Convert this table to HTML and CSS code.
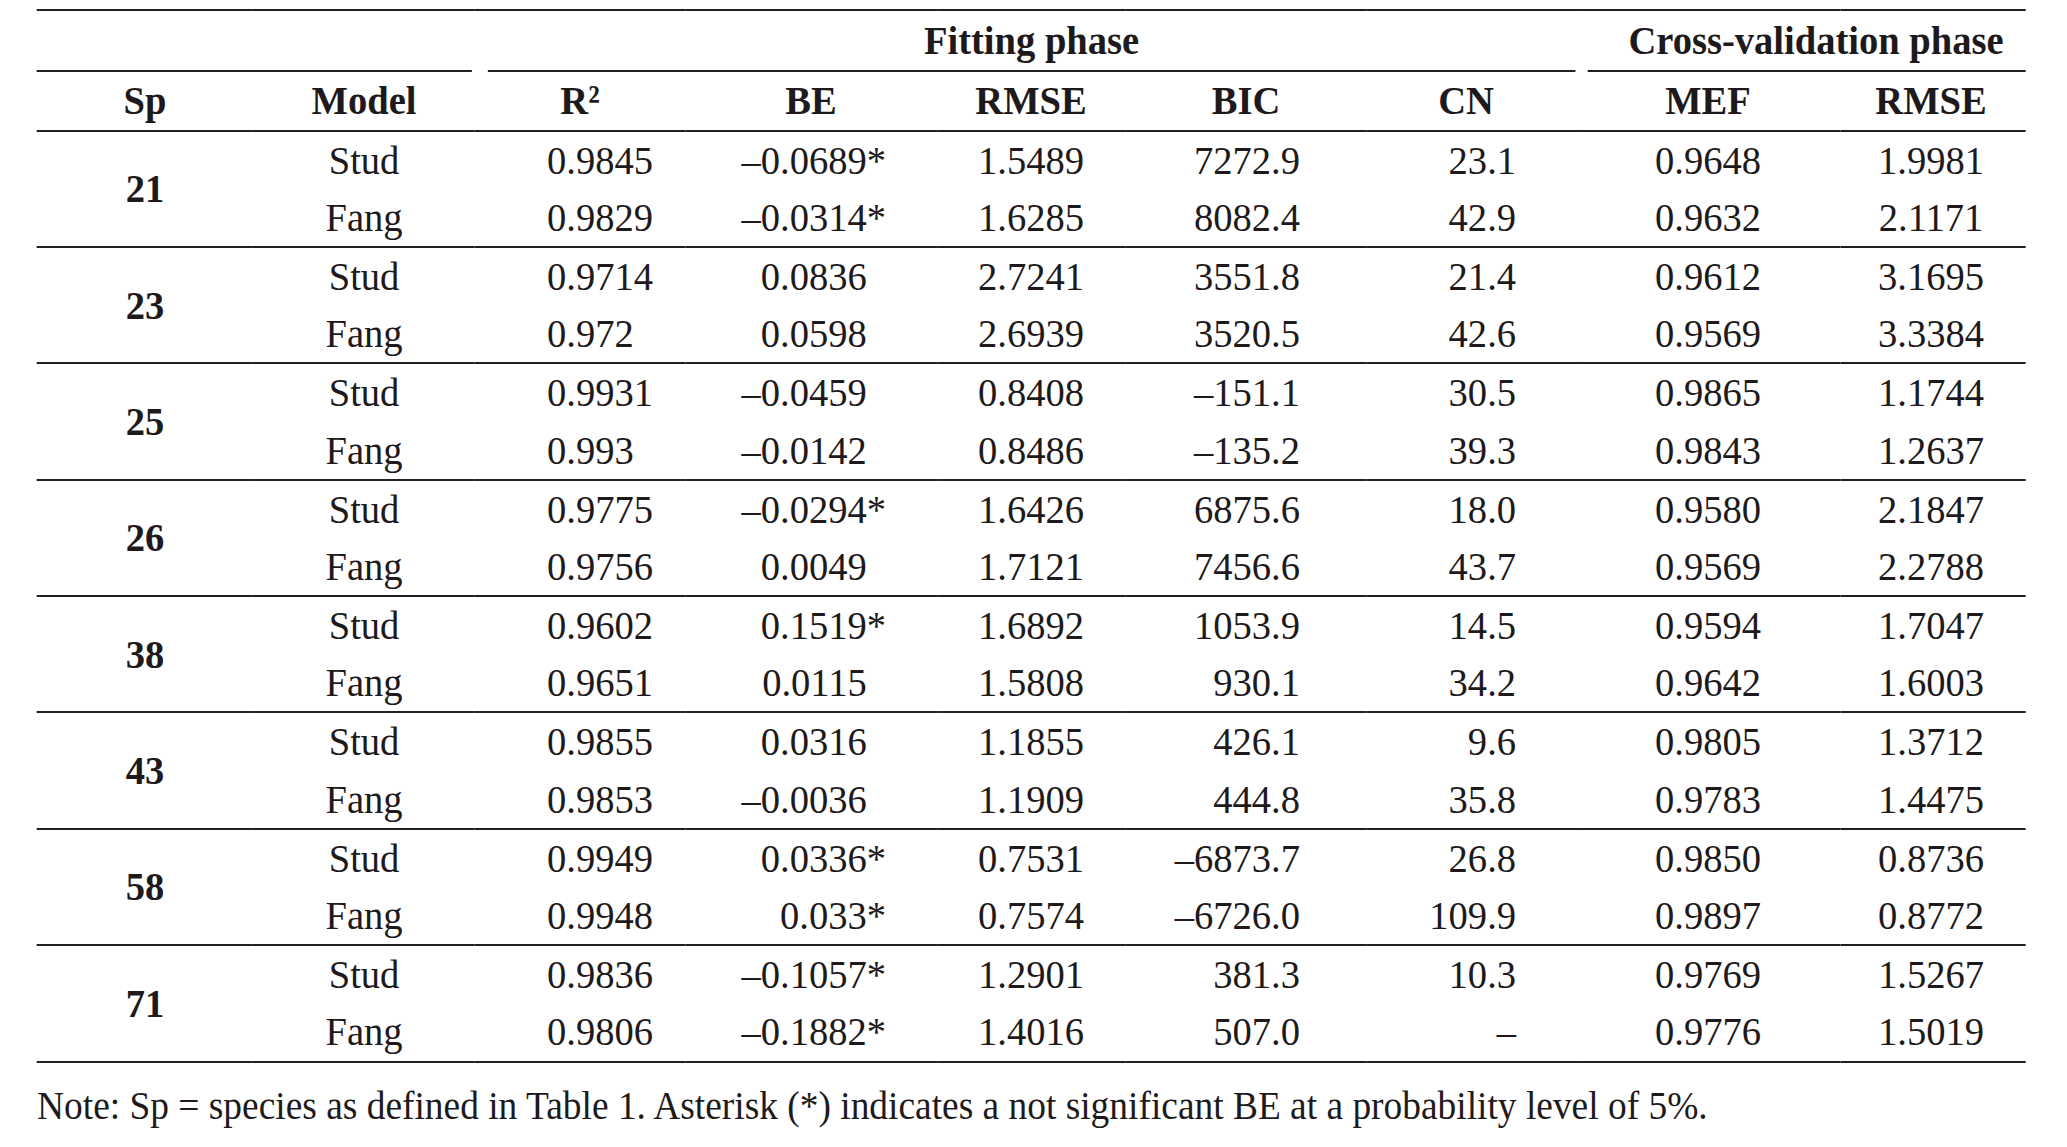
FILE: index.html
```html
<!DOCTYPE html>
<html lang="en">
<head>
<meta charset="utf-8">
<title>Table</title>
<link rel="stylesheet" href="styles.css">
</head>
<body>
<div class="page">
<table class="tbl">
  <colgroup>
    <col class="c-sp"><col class="c-model"><col class="c-r2"><col class="c-be"><col class="c-rmse"><col class="c-bic"><col class="c-cn"><col class="c-mef"><col class="c-rmse2">
  </colgroup>
  <thead>
    <tr class="super">
      <th colspan="2"><div class="rule-wrap rw-left"><span></span></div></th>
      <th colspan="5"><div class="rule-wrap rw-fit"><span>Fitting phase</span></div></th>
      <th colspan="2"><div class="rule-wrap rw-cv"><span>Cross-validation phase</span></div></th>
    </tr>
    <tr class="head">
      <th>Sp</th>
      <th>Model</th>
      <th>R²</th>
      <th>BE</th>
      <th>RMSE</th>
      <th>BIC</th>
      <th class="cnh">CN</th>
      <th class="mef">MEF</th>
      <th class="rmse2">RMSE</th>
    </tr>
  </thead>
  <tbody>
    <tr><td rowspan="2" class="spn">21</td><td>Stud</td><td class="r2">0.9845</td><td class="be">–0.0689*</td><td>1.5489</td><td class="bic">7272.9</td><td class="cn">23.1</td><td class="mef">0.9648</td><td class="rmse2">1.9981</td></tr>
    <tr class="last"><td>Fang</td><td class="r2">0.9829</td><td class="be">–0.0314*</td><td>1.6285</td><td class="bic">8082.4</td><td class="cn">42.9</td><td class="mef">0.9632</td><td class="rmse2">2.1171</td></tr>

    <tr><td rowspan="2" class="spn">23</td><td>Stud</td><td class="r2">0.9714</td><td class="be">0.0836<span class="ast">*</span></td><td>2.7241</td><td class="bic">3551.8</td><td class="cn">21.4</td><td class="mef">0.9612</td><td class="rmse2">3.1695</td></tr>
    <tr class="last"><td>Fang</td><td class="r2">0.972</td><td class="be">0.0598<span class="ast">*</span></td><td>2.6939</td><td class="bic">3520.5</td><td class="cn">42.6</td><td class="mef">0.9569</td><td class="rmse2">3.3384</td></tr>

    <tr><td rowspan="2" class="spn">25</td><td>Stud</td><td class="r2">0.9931</td><td class="be">–0.0459<span class="ast">*</span></td><td>0.8408</td><td class="bic">–151.1</td><td class="cn">30.5</td><td class="mef">0.9865</td><td class="rmse2">1.1744</td></tr>
    <tr class="last"><td>Fang</td><td class="r2">0.993</td><td class="be">–0.0142<span class="ast">*</span></td><td>0.8486</td><td class="bic">–135.2</td><td class="cn">39.3</td><td class="mef">0.9843</td><td class="rmse2">1.2637</td></tr>

    <tr><td rowspan="2" class="spn">26</td><td>Stud</td><td class="r2">0.9775</td><td class="be">–0.0294*</td><td>1.6426</td><td class="bic">6875.6</td><td class="cn">18.0</td><td class="mef">0.9580</td><td class="rmse2">2.1847</td></tr>
    <tr class="last"><td>Fang</td><td class="r2">0.9756</td><td class="be">0.0049<span class="ast">*</span></td><td>1.7121</td><td class="bic">7456.6</td><td class="cn">43.7</td><td class="mef">0.9569</td><td class="rmse2">2.2788</td></tr>

    <tr><td rowspan="2" class="spn">38</td><td>Stud</td><td class="r2">0.9602</td><td class="be">0.1519*</td><td>1.6892</td><td class="bic">1053.9</td><td class="cn">14.5</td><td class="mef">0.9594</td><td class="rmse2">1.7047</td></tr>
    <tr class="last"><td>Fang</td><td class="r2">0.9651</td><td class="be">0.0115<span class="ast">*</span></td><td>1.5808</td><td class="bic">930.1</td><td class="cn">34.2</td><td class="mef">0.9642</td><td class="rmse2">1.6003</td></tr>

    <tr><td rowspan="2" class="spn">43</td><td>Stud</td><td class="r2">0.9855</td><td class="be">0.0316<span class="ast">*</span></td><td>1.1855</td><td class="bic">426.1</td><td class="cn">9.6</td><td class="mef">0.9805</td><td class="rmse2">1.3712</td></tr>
    <tr class="last"><td>Fang</td><td class="r2">0.9853</td><td class="be">–0.0036<span class="ast">*</span></td><td>1.1909</td><td class="bic">444.8</td><td class="cn">35.8</td><td class="mef">0.9783</td><td class="rmse2">1.4475</td></tr>

    <tr><td rowspan="2" class="spn">58</td><td>Stud</td><td class="r2">0.9949</td><td class="be">0.0336*</td><td>0.7531</td><td class="bic">–6873.7</td><td class="cn">26.8</td><td class="mef">0.9850</td><td class="rmse2">0.8736</td></tr>
    <tr class="last"><td>Fang</td><td class="r2">0.9948</td><td class="be">0.033*</td><td>0.7574</td><td class="bic">–6726.0</td><td class="cn">109.9</td><td class="mef">0.9897</td><td class="rmse2">0.8772</td></tr>

    <tr><td rowspan="2" class="spn">71</td><td>Stud</td><td class="r2">0.9836</td><td class="be">–0.1057*</td><td>1.2901</td><td class="bic">381.3</td><td class="cn">10.3</td><td class="mef">0.9769</td><td class="rmse2">1.5267</td></tr>
    <tr class="last"><td>Fang</td><td class="r2">0.9806</td><td class="be">–0.1882*</td><td>1.4016</td><td class="bic">507.0</td><td class="cn">–</td><td class="mef">0.9776</td><td class="rmse2">1.5019</td></tr>
  </tbody>
</table>
<p class="note">Note: Sp = species as defined in Table 1. Asterisk (*) indicates a not significant BE at a probability level of 5%.</p>
</div>
</body>
</html>
```

FILE: styles.css
```css
html, body {
  margin: 0;
  padding: 0;
  background: #ffffff;
  overflow: hidden;
}

/* The source typeface is a slightly condensed Times; emulate it by
   narrowing the whole sheet horizontally. All horizontal sizes below
   are in the unscaled space (real = value x 0.94). */
.page {
  padding: 9px 0 0 39.4px;
  font-family: "Liberation Serif", "Times New Roman", serif;
  color: #1e1a1b;
  transform: scaleX(0.94);
  transform-origin: 0 0;
  width: 2116px;
}

.tbl {
  width: 2116px;
  table-layout: fixed;
  border-collapse: collapse;
  border-top: 2.5px solid #231f20;
  font-size: 41px;
  line-height: 1;
}

.c-sp { width: 229.8px; }
.c-model { width: 236.2px; }
.c-r2 { width: 223.4px; }
.c-be { width: 268.1px; }
.c-rmse { width: 200px; }
.c-bic { width: 257.4px; }
.c-cn { width: 228.7px; }
.c-mef { width: 274.5px; }
.c-rmse2 { width: 197.9px; }

.tbl th, .tbl td {
  padding: 0;
  white-space: nowrap;
  text-align: center;
  vertical-align: middle;
}

.tbl th { font-weight: bold; }

/* spanner header row */
.super th {
  height: 60px;
  vertical-align: bottom;
}
.rule-wrap {
  height: 58.5px;
  border-bottom: 2.5px solid #231f20;
  display: flex;
  align-items: center;
  justify-content: center;
}
.rw-left { margin-right: 3.2px; }
.rw-fit { margin-left: 13.8px; margin-right: 7.4px; }
.rw-cv { margin-left: 6.4px; padding-left: 19px; }

/* column header row */
.head th {
  height: 58px;
  border-bottom: 2.5px solid #231f20;
}

.tbl td { height: 57.2px; }
.tbl tr.last td, .tbl td.spn { border-bottom: 2.5px solid #231f20; }

.spn { font-weight: bold; }

.tbl .r2 { text-align: left; padding-left: 76.6px; }
.tbl .be { text-align: right; padding-right: 54.3px; }
.tbl .bic { text-align: right; padding-right: 71.3px; }
.tbl .cnh { padding-right: 18.1px; }
.tbl .cn { text-align: right; padding-right: 70.2px; }
.tbl .mef { padding-right: 6.4px; }
.tbl .rmse2 { padding-right: 4.3px; }

.ast { visibility: hidden; }

.note {
  margin: 20px 0 0 0;
  font-size: 39.8px;
  line-height: 1.2;
  white-space: nowrap;
}
```
